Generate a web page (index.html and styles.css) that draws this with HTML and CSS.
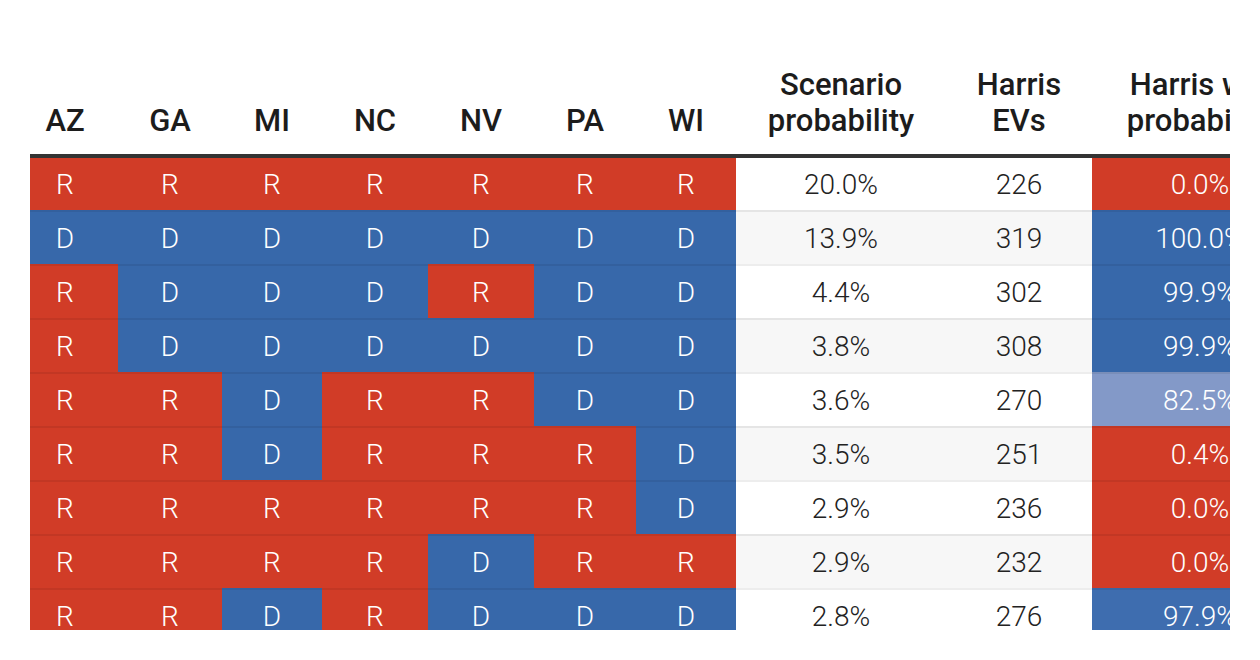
FILE: index.html
```html
<!DOCTYPE html>
<html>
<head>
<meta charset="utf-8">
<link rel="stylesheet" href="styles.css">
</head>
<body>
<div class="wrap">
  <div class="clip">
    <table class="sc">
      <colgroup>
        <col class="c-az"><col class="c-ga"><col class="c-mi"><col class="c-nc"><col class="c-nv"><col class="c-pa"><col class="c-wi"><col class="c-sp"><col class="c-ev"><col class="c-wp">
      </colgroup>
      <thead>
        <tr>
          <th class="first">AZ</th><th>GA</th><th>MI</th><th>NC</th><th>NV</th><th>PA</th><th>WI</th>
          <th>Scenario<br>probability</th><th>Harris<br>EVs</th><th>Harris win<br>probability</th>
        </tr>
      </thead>
      <tbody>
        <tr><td class="first r">R</td><td class="r">R</td><td class="r">R</td><td class="r">R</td><td class="r">R</td><td class="r">R</td><td class="r">R</td><td>20.0%</td><td>226</td><td class="r">0.0%</td></tr>
        <tr class="alt"><td class="first d">D</td><td class="d">D</td><td class="d">D</td><td class="d">D</td><td class="d">D</td><td class="d">D</td><td class="d">D</td><td>13.9%</td><td>319</td><td class="d">100.0%</td></tr>
        <tr><td class="first r">R</td><td class="d">D</td><td class="d">D</td><td class="d">D</td><td class="r">R</td><td class="d">D</td><td class="d">D</td><td>4.4%</td><td>302</td><td class="d">99.9%</td></tr>
        <tr class="alt"><td class="first r">R</td><td class="d">D</td><td class="d">D</td><td class="d">D</td><td class="d">D</td><td class="d">D</td><td class="d">D</td><td>3.8%</td><td>308</td><td class="d">99.9%</td></tr>
        <tr><td class="first r">R</td><td class="r">R</td><td class="d">D</td><td class="r">R</td><td class="r">R</td><td class="d">D</td><td class="d">D</td><td>3.6%</td><td>270</td><td class="dl">82.5%</td></tr>
        <tr class="alt"><td class="first r">R</td><td class="r">R</td><td class="d">D</td><td class="r">R</td><td class="r">R</td><td class="r">R</td><td class="d">D</td><td>3.5%</td><td>251</td><td class="r">0.4%</td></tr>
        <tr><td class="first r">R</td><td class="r">R</td><td class="r">R</td><td class="r">R</td><td class="r">R</td><td class="r">R</td><td class="d">D</td><td>2.9%</td><td>236</td><td class="r">0.0%</td></tr>
        <tr class="alt"><td class="first r">R</td><td class="r">R</td><td class="r">R</td><td class="r">R</td><td class="d">D</td><td class="r">R</td><td class="r">R</td><td>2.9%</td><td>232</td><td class="r">0.0%</td></tr>
        <tr><td class="first r">R</td><td class="r">R</td><td class="d">D</td><td class="r">R</td><td class="d">D</td><td class="d">D</td><td class="d">D</td><td>2.8%</td><td>276</td><td class="d2">97.9%</td></tr>
      </tbody>
    </table>
  </div>
</div>
</body>
</html>
```

FILE: styles.css
```css
html, body {
  margin: 0;
  padding: 0;
  background: #fff;
}
body {
  font-family: Roboto, "Liberation Sans", sans-serif;
  color: #222;
}
.wrap {
  padding: 50px 30px 0 30px;
}
.clip {
  width: 1200px;
  height: 580px;
  overflow: hidden;
}
.sc {
  table-layout: fixed;
  width: 1278px;
  border-collapse: separate;
  border-spacing: 0;
}
.c-az { width: 88px; }
.c-ga { width: 104px; }
.c-mi { width: 100px; }
.c-nc { width: 106px; }
.c-nv { width: 106px; }
.c-pa { width: 102px; }
.c-wi { width: 100px; }
.c-sp { width: 210px; }
.c-ev { width: 146px; }
.c-wp { width: 216px; }

.sc th {
  font-weight: 500;
  font-size: 31px;
  line-height: 36px;
  color: #1c1c1c;
  text-align: center;
  vertical-align: bottom;
  padding: 17px 0 15px 0;
  border-bottom: 4px solid #333;
  white-space: nowrap;
}
.sc td {
  font-weight: 300;
  font-size: 28px;
  line-height: 32px;
  height: 52px;
  padding: 1px 0 0 0;
  text-align: center;
  vertical-align: middle;
  box-sizing: border-box;
  white-space: nowrap;
}
.sc tbody tr + tr td {
  border-top: 2px solid rgba(0, 0, 0, 0.07);
  height: 54px;
}
.sc th.first,
.sc td.first {
  padding-right: 18px;
}
.sc tr.alt td {
  background: #f7f7f7;
}
.sc td.r,
.sc tr.alt td.r {
  background: #d13c27;
  color: #fff;
}
.sc td.d,
.sc tr.alt td.d {
  background: #3768aa;
  color: #fff;
}
.sc td.dl {
  background: #8399c8;
  color: #fff;
}
.sc td.d2 {
  background: #3e6daf;
  color: #fff;
}
```
